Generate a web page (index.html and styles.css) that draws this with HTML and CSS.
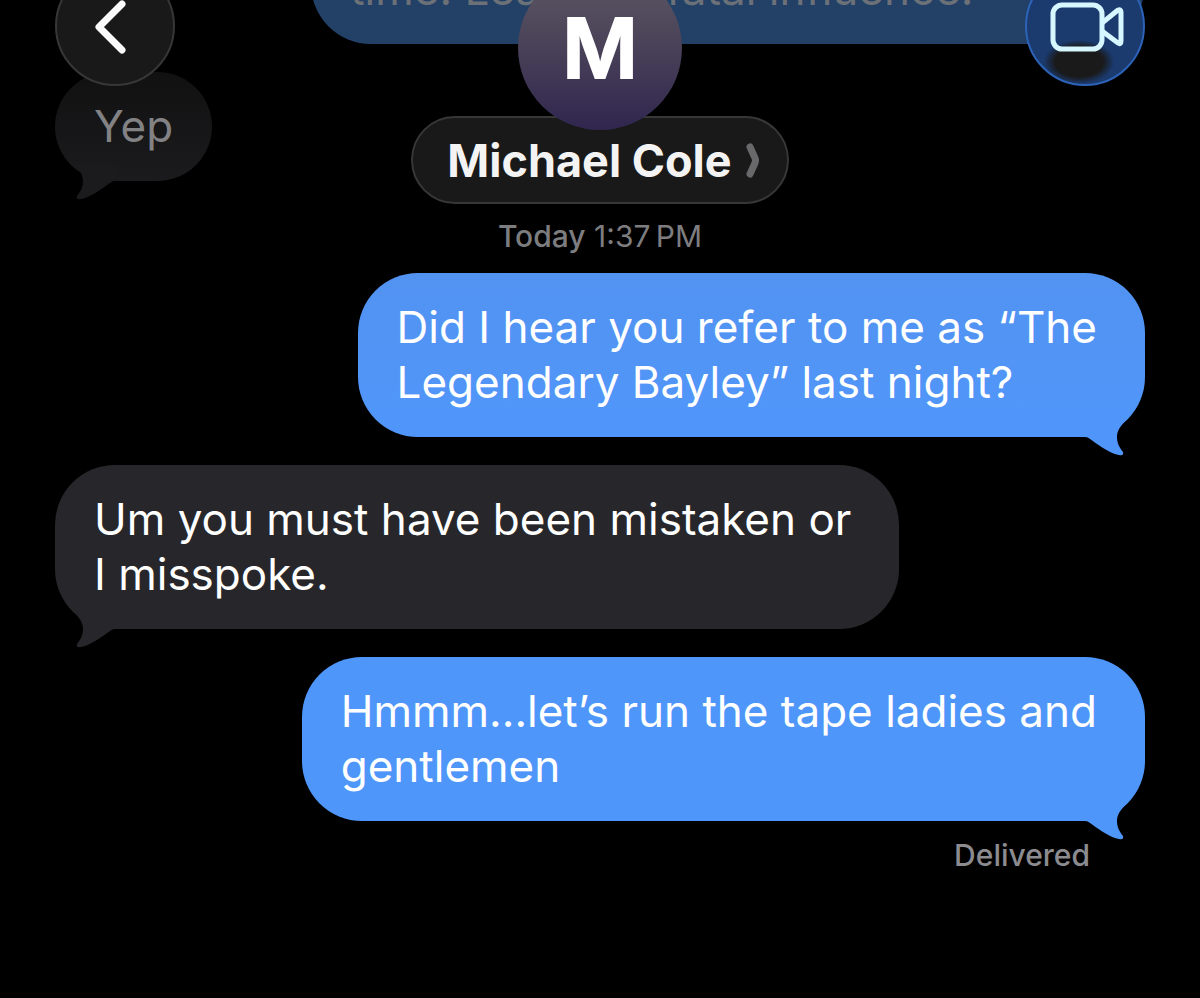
FILE: index.html
```
<!DOCTYPE html>
<html lang="en">
<head>
    <meta charset="UTF-8">
    <meta name="viewport" content="width=device-width, initial-scale=1.0">
    <title>Michael Cole</title>
    <link rel="stylesheet" href="styles.css">
</head>
<body>

    <header class="chat-header">
        <button type="button" class="round-button back-button" aria-label="Back">
            <svg width="32" height="56" viewBox="0 0 32 56" fill="none">
                <path d="M27 6 L4 29 L27 52" stroke="#fafafa" stroke-width="7" stroke-linecap="round" stroke-linejoin="round"/>
            </svg>
        </button>

        <div class="contact">
            <div class="avatar">M</div>
            <button type="button" class="contact-name">
                Michael Cole
                <svg width="14" height="36" viewBox="0 0 14 36" fill="none">
                    <path d="M4 5 L9 16 Q10 18 9 21 L4 32" stroke="#69696b" stroke-width="7" stroke-linecap="round" stroke-linejoin="round"/>
                </svg>
            </button>
        </div>

        <button type="button" class="round-button video-button" aria-label="Video call">
            <svg width="76" height="52" viewBox="0 0 76 52" fill="none" stroke="#d6f7ff" stroke-width="5" stroke-linejoin="round">
                <rect x="4" y="5" width="49" height="44" rx="9"/>
                <path d="M53 23 L69 10 Q72 9 72 12 V41 Q72 45 69 43 L53 31"/>
            </svg>
        </button>
    </header>

    <main class="chat">
        <p class="bubble sent sent-old">time! Lea<span class="rest">fatal influence.</span></p>
        <p class="bubble received received-old tail">Yep</p>
        <p class="date"><b>Today</b> 1:37&#8239;PM</p>
        <p class="bubble sent tail">Did I hear you refer to me as “The<br>Legendary Bayley” last night?</p>
        <p class="bubble received tail">Um you must have been mistaken or<br>I misspoke.</p>
        <p class="bubble sent sent-new tail">Hmmm...let’s run the tape ladies and<br>gentlemen</p>
        <p class="status">Delivered</p>
    </main>

</body>
</html>
```

FILE: styles.css
```
* {
    box-sizing: border-box;
}

body {
    margin: 0;
    background-color: #000;
    color: #fff;
    font-family: Inter, "Liberation Sans", sans-serif;
    font-size: 44px;
    line-height: 55px;
}

button {
    padding: 0;
    color: inherit;
    font: inherit;
    cursor: pointer;
}

/* header floats over the messages */
.chat-header {
    position: absolute;
    top: -34px;
    left: 0;
    right: 0;
    z-index: 1;
    display: flex;
    justify-content: space-between;
    align-items: flex-start;
    padding: 0 55px;
}

.round-button {
    display: flex;
    justify-content: center;
    align-items: center;
    width: 120px;
    height: 120px;
    border-radius: 50%;
}

.back-button {
    background-color: #191919;
    border: 2px solid #373737;
    padding-right: 8px;
}

.video-button {
    background: radial-gradient(ellipse 32px 20px at 52px 94px, #1a1a1a 75%, rgba(26, 26, 26, 0) 110%), #1b3a6e;
    border: 2px solid #2c63b8;
    padding-left: 4px;
}

.contact {
    display: flex;
    flex-direction: column;
    align-items: center;
}

.avatar {
    position: relative;
    width: 164px;
    height: 164px;
    border-radius: 50%;
    background: linear-gradient(#55505f 20%, #4b4459 45%, #30264f);
    font-size: 82px;
    font-weight: 600;
    line-height: 166px;
    text-align: center;
    -webkit-text-stroke: 2px #fff;
}

.contact-name {
    display: flex;
    align-items: center;
    gap: 14px;
    height: 88px;
    margin-top: -14px;
    padding: 0 27px 0 34px;
    background-color: #191919;
    border: 2px solid #373737;
    border-radius: 44px;
    color: #f3f3f3;
    font-size: 45px;
    font-weight: 700;
}

/* newest message stays at the bottom, older ones run off the top */
.chat {
    display: flex;
    flex-direction: column;
    justify-content: flex-end;
    height: 100vh;
    padding: 0 55px 128px;
    overflow: hidden;
}

.chat p {
    flex-shrink: 0;
    margin: 0;
}

.chat .bubble {
    position: relative;
    margin-bottom: 28px;
    padding: 27px 48px 27px 39px;
    border-radius: 60px;
}

.sent {
    align-self: flex-end;
    background: linear-gradient(#5293f1, #5096fa);
}

.chat .sent-new {
    margin-bottom: 19px;
    background: #4e96fa;
}

.received {
    align-self: flex-start;
    background: #27272b;
}

.sent-old {
    display: flex;
    align-items: flex-end;
    width: 76.5%;
    min-height: 164px;
    background: #234067;
    color: #6c7178;
}

.rest {
    margin-left: 126px;
}

.chat .received-old {
    padding-right: 39px;
    background: linear-gradient(#111112, #1b1b1d);
    color: #828284;
}

.tail::after {
    content: "";
    position: absolute;
    right: 20px;
    bottom: -19px;
    width: 40px;
    height: 41px;
    background: #5096fa;
    clip-path: path("M0 6 L40 6 C36 11 32 15 32 22 C32 29 35 33 38 37 Q39 41 34 40 C23 38 11 28 5 24 Q3 22 0 22 Z");
}

.sent-new::after {
    background: #4e96fa;
}

.received::after {
    right: auto;
    left: 20px;
    background: #27272b;
    transform: scaleX(-1);
}

.received-old::after {
    background: #1b1b1d;
}

.date {
    padding-bottom: 9px;
    color: #7d7d80;
    font-size: 30px;
    text-align: center;
}

.date b {
    font-weight: 500;
}

.status {
    align-self: flex-end;
    padding-right: 55px;
    color: #8b8b90;
    font-size: 30px;
    font-weight: 500;
    line-height: 30px;
}
```
